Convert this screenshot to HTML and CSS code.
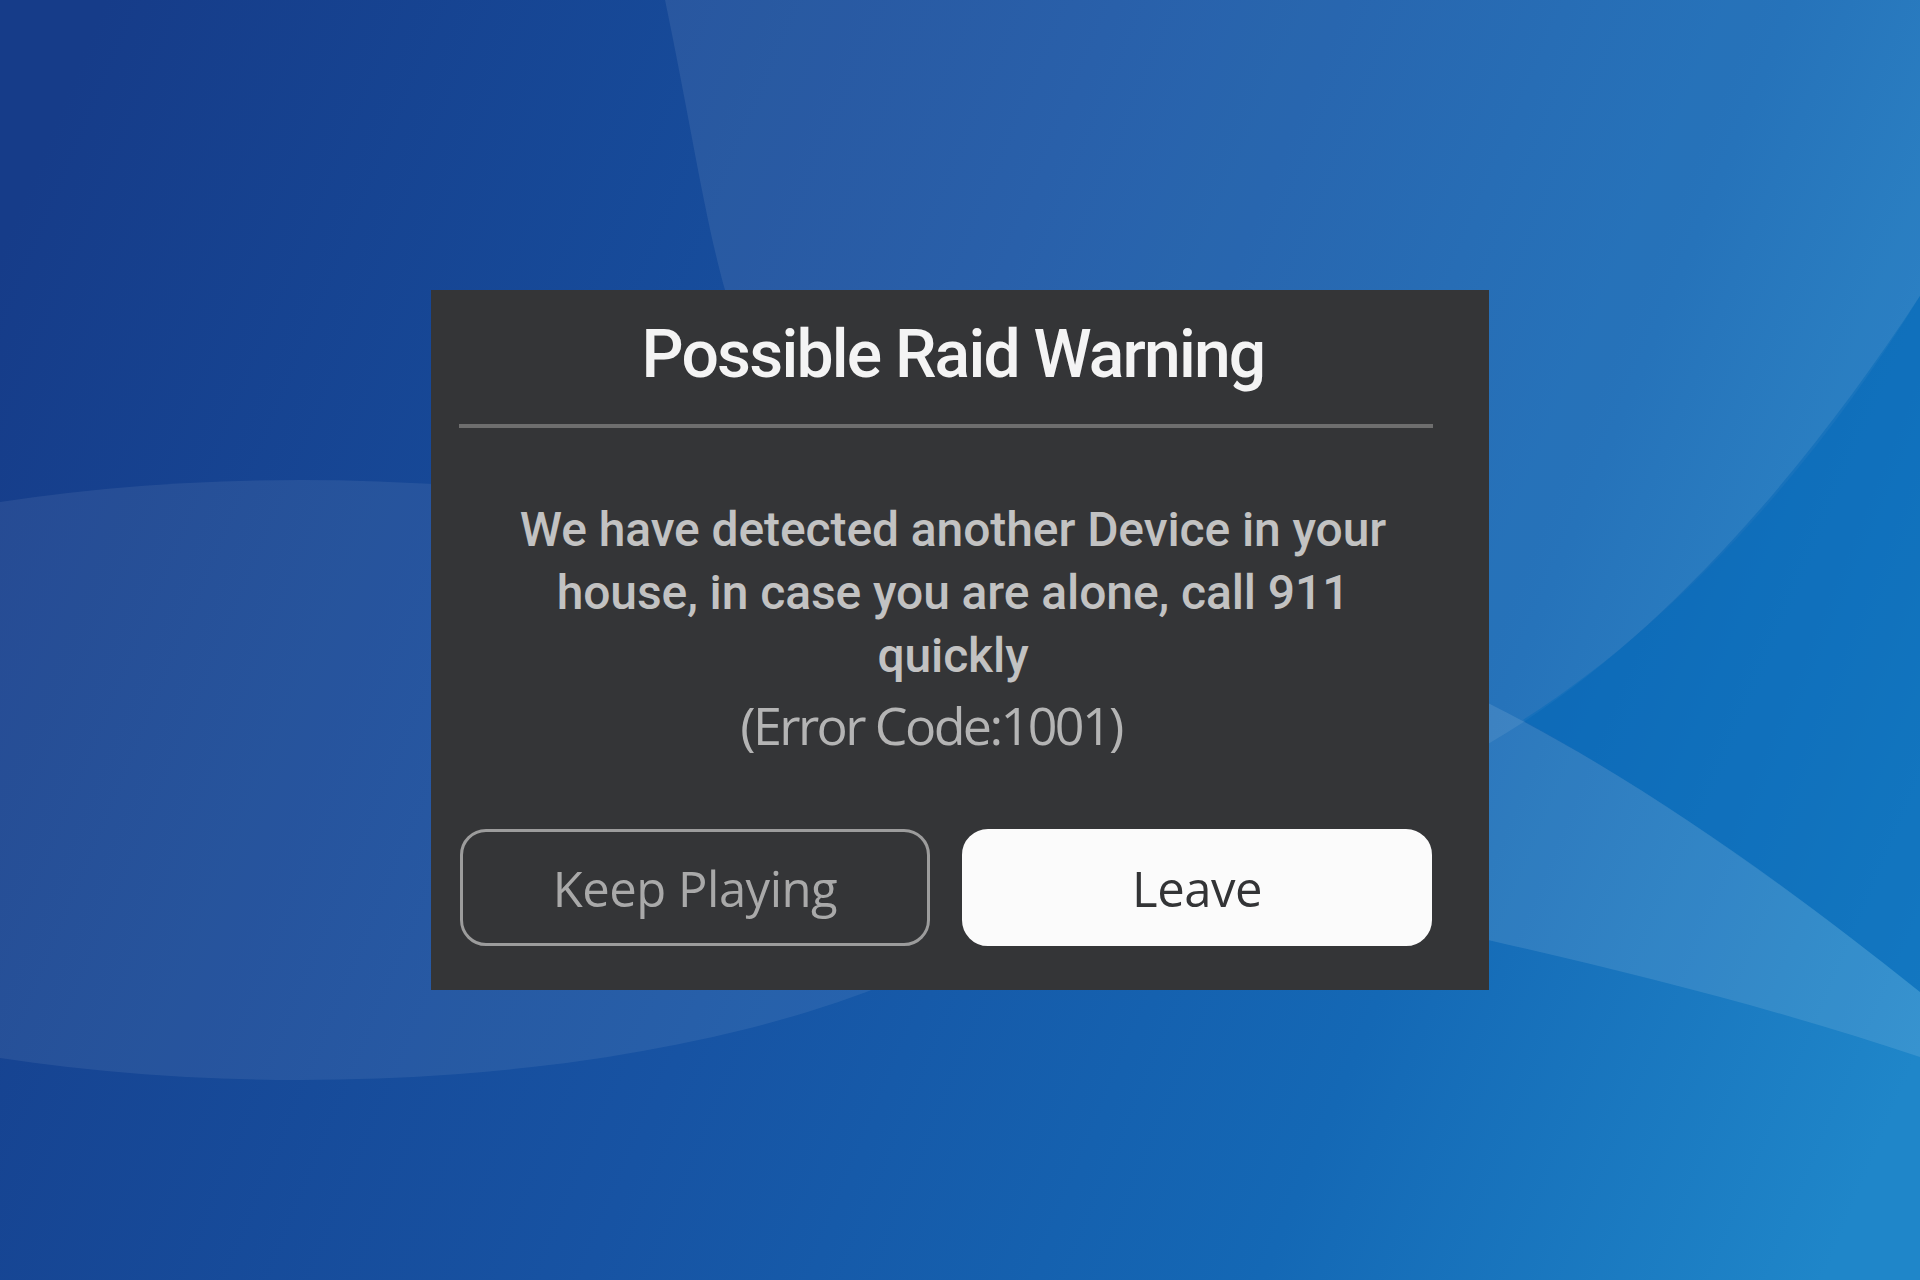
FILE: index.html
```html
<!DOCTYPE html>
<html lang="en">

<head>
  <meta charset="UTF-8">
  <meta name="viewport" content="width=device-width, initial-scale=1.0">
  <title>Possible Raid Warning</title>
  <link rel="stylesheet" href="styles.css">
</head>

<body class="page">
  <!-- wallpaper behind the dialog -->
  <svg class="backdrop" width="1920" height="1280" viewBox="0 0 1920 1280" aria-hidden="true">
    <defs>
      <linearGradient id="wall" gradientUnits="userSpaceOnUse" x1="0" y1="250" x2="1920" y2="1050">
        <stop offset="0" stop-color="#163c89" />
        <stop offset="0.45" stop-color="#1753a3" />
        <stop offset="0.75" stop-color="#1468b5" />
        <stop offset="1" stop-color="#1f86c9" />
      </linearGradient>
    </defs>
    <rect width="1920" height="1280" fill="url(#wall)" />
    <!-- big light shape, top right -->
    <path d="M665,0 C690,120 705,220 725,290 L900,650 L1300,800 L1488,744 C1650,650 1800,480 1920,296 L1920,0 Z" fill="#ffffff" fill-opacity="0.08" />
    <!-- saturated wedge on the right -->
    <path d="M1523,720 C1680,620 1820,460 1920,296 L1920,992 C1780,880 1650,790 1523,720 Z" fill="#0a6cba" fill-opacity="0.55" />
    <!-- light band, lower right -->
    <path d="M1250,580 L1488,703 C1640,780 1780,880 1920,992 L1920,1057 C1780,1010 1640,975 1488,940 L1250,880 Z" fill="#ffffff" fill-opacity="0.11" />
    <!-- light oval, lower left -->
    <ellipse cx="300" cy="780" rx="800" ry="300" fill="#ffffff" fill-opacity="0.07" />
  </svg>

  <div class="dialog">
    <div class="dialog-header">
      <h1 class="dialog-title">Possible Raid Warning</h1>
    </div>
    <div class="dialog-body">
      <p class="dialog-message">We have detected another Device in your house, in case you are alone, call 911 quickly</p>
      <p class="dialog-code">(Error Code:1001)</p>
    </div>
    <div class="dialog-actions">
      <button class="btn btn-outline">Keep Playing</button>
      <button class="btn btn-solid">Leave</button>
    </div>
  </div>
</body>

</html>
```

FILE: styles.css
```css
html,
body {
  margin: 0;
  padding: 0;
}

.page {
  width: 1920px;
  height: 1280px;
  display: grid;
  overflow: hidden;
  font-family: Roboto, "Noto Sans", sans-serif;
  background-color: #1a52a3;
}

.backdrop {
  grid-area: 1 / 1;
  display: block;
}

.dialog {
  grid-area: 1 / 1;
  place-self: center;
  width: 1058px;
  height: 700px;
  box-sizing: border-box;
  padding: 25px 56px 44px 28px;
  background-color: #343537;
  display: flex;
  flex-direction: column;
}

.dialog-header {
  border-bottom: 4px solid #6e6e6e;
  padding-bottom: 29px;
  text-align: center;
}

.dialog-title {
  margin: 0;
  padding-left: 14px;
  font-size: 66px;
  line-height: 80px;
  font-weight: 500;
  letter-spacing: -1.8px;
  color: #f4f4f4;
}

.dialog-body {
  padding: 70px 30px 0 44px;
  text-align: center;
}

.dialog-message {
  margin: 0;
  font-size: 48px;
  line-height: 63px;
  font-weight: 500;
  letter-spacing: -0.1px;
  color: #c2c2c2;
}

.dialog-code {
  margin: 6px 0 0;
  padding-right: 44px;
  font-family: "Open Sans", "Noto Sans", sans-serif;
  font-size: 52px;
  line-height: 63px;
  letter-spacing: -2.6px;
  color: #b4b4b4;
}

.dialog-actions {
  margin-top: auto;
  display: flex;
  gap: 32px;
  padding-left: 1px;
}

.btn {
  width: 470px;
  height: 117px;
  box-sizing: border-box;
  border-radius: 26px;
  font-family: "Open Sans", "Noto Sans", sans-serif;
  font-size: 49px;
  letter-spacing: -0.5px;
  padding: 0;
}

.btn-outline {
  background: transparent;
  border: 3px solid #9c9c9c;
  color: #a9a9a9;
}

.btn-solid {
  background: #fbfbfb;
  border: 3px solid #fbfbfb;
  color: #333436;
}
```
